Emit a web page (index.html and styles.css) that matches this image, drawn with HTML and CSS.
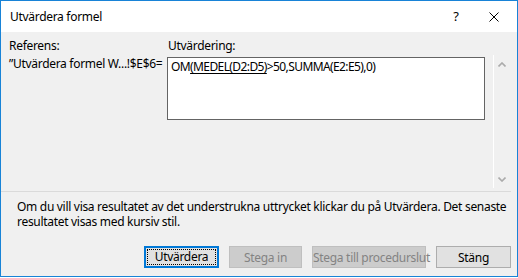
FILE: index.html
```html
<!DOCTYPE html>
<html>
<head>
<meta charset="utf-8" />
<title>Utvärdera formel</title>
<link rel="stylesheet" href="styles.css">
</head>
<body>
<div class="dialog">
	<div class="title_bar">
		<span class="title">Utvärdera formel</span>
		<span class="title_btn help">?</span>
		<span class="title_btn close">
			<svg width="10" height="10" viewBox="0 0 10 10"><path d="M0.5 0.5L9.5 9.5M9.5 0.5L0.5 9.5" stroke="#000" stroke-width="1" fill="none"/></svg>
		</span>
	</div>
	<div class="eval_area">
		<div class="lbl">Referens:</div>
		<div class="lbl lbl_eval">Utvärdering:</div>
		<div></div>
		<div class="lbl ref_name">”Utvärdera formel W...!$E$6=</div>
		<div class="eval_box">OM<u>(MEDEL(D2:D5)</u>&gt;50,SUMMA(E2:E5),0)</div>
		<div class="scroll_bar">
			<svg width="8" height="5" viewBox="0 0 8 5"><path d="M0.5 4.5L4 1L7.5 4.5" stroke="#ababab" stroke-width="1.6" fill="none"/></svg>
			<svg width="8" height="5" viewBox="0 0 8 5"><path d="M0.5 0.5L4 4L7.5 0.5" stroke="#ababab" stroke-width="1.6" fill="none"/></svg>
		</div>
	</div>
	<div class="separator"></div>
	<p class="hint">Om du vill visa resultatet av det understrukna uttrycket klickar du på Utvärdera. Det senaste resultatet visas med kursiv stil.</p>
	<div class="btn_row">
		<button class="btn btn_focus"><span>Utvärdera</span></button>
		<button class="btn btn_step" disabled>Stega in</button>
		<button class="btn btn_out" disabled>Stega till procedurslut</button>
		<button class="btn">Stäng</button>
	</div>
</div>
</body>
</html>
```

FILE: styles.css
```css
html,body{margin:0;padding:0;background:#fff;}
body{font:12px/15px "Noto Sans", "Open Sans", sans-serif;letter-spacing:-0.3px;color:#000;}
.dialog{box-sizing:border-box;width:518px;height:277px;border:1px solid #1883d7;background:#f0f0f0;display:flex;flex-direction:column;}
.title_bar{height:31px;background:#fff;display:flex;align-items:center;padding-left:9px;}
.title{flex:1;}
.title_btn{display:flex;align-items:center;justify-content:center;height:31px;}
.help{width:30px;font-size:13px;}
.close{width:46px;}

.eval_area{display:grid;grid-template-columns:158px 318px 24px;grid-template-rows:17px auto;padding:6px 0 0 8px;}
.lbl{white-space:nowrap;min-width:0;}
.lbl_eval{padding-left:1px;}
.ref_name{padding-top:1px;}
.eval_box{box-sizing:border-box;margin-top:2px;height:63px;border:1px solid #646464;background:#fff;padding:1px 3px;line-height:15px;letter-spacing:-0.6px;}
.eval_box u{text-underline-offset:2px;}
.scroll_bar{box-sizing:border-box;width:16px;margin-left:8px;height:133px;border-left:1px solid #fff;display:flex;flex-direction:column;justify-content:space-between;align-items:center;padding:7px 0 6px;}

.separator{height:1px;background:#dadada;margin:3px 6px 0 0;}
.hint{margin:7px 10px 0 16px;}
.btn_row{display:flex;justify-content:flex-end;gap:10px;margin-top:17px;padding-right:6px;}
.btn{box-sizing:border-box;height:22px;width:75px;padding:0;white-space:nowrap;font:12px "Noto Sans", "Open Sans", sans-serif;letter-spacing:-0.3px;color:#000;background:#e1e1e1;border:1px solid #adadad;}
.btn_focus{border:2px solid #0078d7;padding:1px;}
.btn_focus span{display:block;height:100%;box-sizing:border-box;border:1px dotted #000;line-height:14px;}
.btn_step{width:73px;}
.btn_out{width:114px;}
.btn[disabled]{background:#cccccc;border-color:#bfbfbf;color:#838383;}
```
